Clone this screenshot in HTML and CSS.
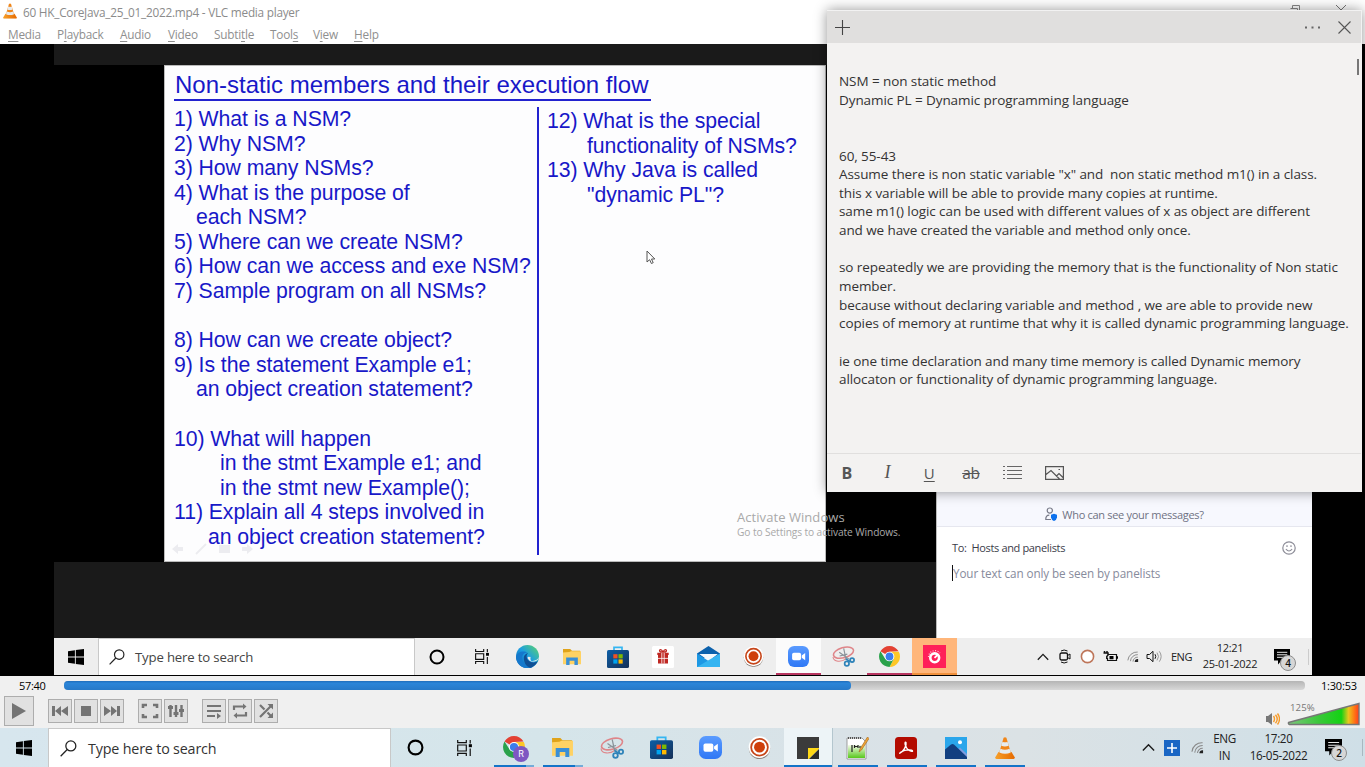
FILE: index.html
```html
<!DOCTYPE html>
<html lang="en">
<head>
<meta charset="utf-8">
<title>60 HK_CoreJava_25_01_2022.mp4 - VLC media player</title>
<link rel="stylesheet" href="styles.css">
</head>
<body>
<svg class="defs" width="0" height="0">
  <defs>
    <linearGradient id="gEdge" x1="0" y1="1" x2="1" y2="0"><stop offset="0" stop-color="#0c59a4"/><stop offset=".5" stop-color="#1b9de2"/><stop offset="1" stop-color="#5fd668"/></linearGradient>
    <linearGradient id="gStore" x1="0" y1="0" x2="1" y2="1"><stop offset="0" stop-color="#0d5ea6"/><stop offset="1" stop-color="#153057"/></linearGradient>
    <linearGradient id="gZoom" x1="0" y1="0" x2="0" y2="1"><stop offset="0" stop-color="#5a9bff"/><stop offset="1" stop-color="#2f78f5"/></linearGradient>
    <linearGradient id="gCone" x1="0" y1="0" x2="1" y2="0"><stop offset="0" stop-color="#f7a02a"/><stop offset="1" stop-color="#e56a00"/></linearGradient>
    <linearGradient id="gVol" x1="0" y1="0" x2="1" y2="0"><stop offset="0" stop-color="#7cc67c"/><stop offset=".45" stop-color="#38c838"/><stop offset=".75" stop-color="#14d214"/><stop offset=".85" stop-color="#e8c81e"/><stop offset=".93" stop-color="#ff7a14"/><stop offset="1" stop-color="#ff3c1e"/></linearGradient>
    <linearGradient id="gNpp" x1="0" y1="0" x2="0" y2="1"><stop offset="0" stop-color="#f4fbe8"/><stop offset="1" stop-color="#58c81c"/></linearGradient>
  </defs>
  <symbol id="win" viewBox="0 0 16 16"><path d="M0 2.2 6.9 1.2V7.6H0zM7.8 1.1 16 0V7.6H7.8zM0 8.4H6.9V14.8L0 13.8zM7.8 8.4H16V16L7.8 14.9z"/></symbol>
  <symbol id="lens" viewBox="0 0 16 16"><g fill="none" stroke="#222" stroke-width="1.2"><circle cx="10.2" cy="5.6" r="4.7"/><path d="M6.8 9 .6 15.3"/></g></symbol>
  <symbol id="ring" viewBox="0 0 16 16"><circle cx="8" cy="8" r="6.5" fill="none" stroke="#000" stroke-width="2"/></symbol>
  <symbol id="tview" viewBox="0 0 16 16"><g fill="none" stroke="#111" stroke-width="1.2"><path d="M1.2 0V2.7H9.8V0M1.2 16V13.3H9.8V16M1.2 5H9.8V11H1.2zM13.7 0V3.500M13.7 8.500V16"/></g><path d="M12.3 4.2H15.4V7.2H12.3z"/></symbol>
  <symbol id="chrome" viewBox="0 0 22 22"><path d="M11 11 1.500 5.500A11 11 0 0 1 20.500 5.500L11 6z" fill="#e34133"/><path d="M11 6H20.800A11 11 0 0 1 11 22L15.500 13.600z" fill="#fdc727"/><path d="M11 22A11 11 0 0 1 1.500 5.500L6.600 13.500 15.400 13.600z" fill="#2aa24b"/><circle cx="11" cy="11" r="5.1" fill="#fff"/><circle cx="11" cy="11" r="4.1" fill="#3b7ded"/></symbol>
  <symbol id="folder" viewBox="0 0 22 20"><path d="M1 1H9L11 3H20V7H1z" fill="#e0a31a"/><path d="M1 5 8 4.500 10 3.600H21V18H1z" fill="#ffd263"/><path d="M4.500 19V10.500H17.500V19H13.700V14.200H8.300V19z" fill="#3a8fd6"/></symbol>
  <symbol id="store" viewBox="0 0 22 22"><path d="M7 5V1.300H15V5" fill="none" stroke="#35b6f2" stroke-width="1.7"/><rect y="4" width="22" height="18" rx="1.6" fill="url(#gStore)"/><path d="M6.300 8.200H10.500V12.400H6.300z" fill="#f25022"/><path d="M11.500 8.200H15.700V12.400H11.500z" fill="#7fba00"/><path d="M6.300 13.400H10.500V17.600H6.300z" fill="#00a4ef"/><path d="M11.500 13.400H15.700V17.600H11.500z" fill="#ffb900"/></symbol>
  <symbol id="zoom" viewBox="0 0 22 22"><rect width="22" height="22" rx="6.5" fill="url(#gZoom)"/><rect x="4.3" y="7.2" width="9.4" height="7.8" rx="1.8" fill="#fff"/><path d="M14.4 10 18 7.400V14.800L14.400 12.300z" fill="#fff"/></symbol>
  <symbol id="target" viewBox="0 0 22 22"><circle cx="11" cy="11.8" r="10.2" fill="#8c817b"/><circle cx="11" cy="10.700" r="10.4" fill="#fff"/><circle cx="11" cy="10.700" r="8" fill="none" stroke="#c6461a" stroke-width="1.7"/><circle cx="11" cy="10.700" r="5.2" fill="#cf3f0b"/></symbol>
  <symbol id="snip" viewBox="0 0 24 22"><g fill="none" stroke="#df8589" stroke-width="1.6"><ellipse cx="12" cy="7" rx="10.8" ry="5.3" transform="rotate(-16 12 7)"/><path d="M1 11.500C1.500 17 10 17 14.500 13.500" stroke-width="1.1"/></g><path d="M7.500 6.500 17.500 13.600M12.200 2.500 14.700 14.200M8 10.500 16 8.500" stroke="#8a9299" stroke-width="1.2" fill="none"/><g fill="none" stroke="#2f83b9" stroke-width="1.8"><circle cx="15.5" cy="18.5" r="2.3"/><circle cx="21" cy="14.7" r="2.1"/><path d="M14.500 13.500 19 16.500"/></g></symbol>
  <symbol id="cone" viewBox="0 0 20 22"><path d="M3.500 15H16.500L19.700 20.300Q20 22 18.500 22H1.500Q0 22 .3 20.300z" fill="url(#gCone)"/><path d="M8.600.8Q10-.4 11.400.8L16 16.300Q10 20 4 16.300z" fill="#f0861a"/><path d="M7.500 4.700Q10 5.800 12.500 4.700L13.700 8.800Q10 10.400 6.200 8.800z" fill="#e6ebef"/><path d="M5.400 11.700Q10 14 14.600 11.700L15.700 15.500Q10 18.200 4.300 15.500z" fill="#e6ebef"/></symbol>
  <symbol id="wifi" viewBox="0 0 14 14"><g fill="none" stroke="#888" stroke-width="1.1"><path d="M1 11.500A10.800 10.800 0 0 1 12.500 1.800M4 12.500A8.300 8.300 0 0 1 12.600 4.800M7 13A5.300 5.300 0 0 1 12.700 7.800"/></g><path d="M9 13.300A3.600 3.600 0 0 1 13 10V13.300z" fill="#222"/></symbol>
  <symbol id="chev" viewBox="0 0 12 8"><path d="M.8 6.800 6 1.400 11.200 6.800" fill="none" stroke="#1c1c1c" stroke-width="1.3"/></symbol>
  <symbol id="note" viewBox="0 0 16 16"><path d="M0 0H16V11.500H7.500L4 15.500V11.500H0z"/><path d="M3 3.300H13.300M3 5.800H13.300M3 8.300H10" stroke="#e8e8e8" stroke-width="1"/></symbol>
</svg>

<div class="player">
  <header class="titlebar">
    <svg class="app-icon" viewBox="0 0 20 22"><use href="#cone"/></svg>
    <span class="title">60 HK_CoreJava_25_01_2022.mp4 - VLC media player</span>
    <div class="winbtns">
      <svg width="12" height="12"><path d="M1 5.500H11" stroke="#777"/></svg>
      <svg width="12" height="12"><path d="M1.500 3.500H8.500V11M3.500 3.500V.5H10.500V8" fill="none" stroke="#888"/></svg>
      <svg width="12" height="12"><path d="M1 0 11 10M11 0 1 10" stroke="#777"/></svg>
    </div>
  </header>
  <nav class="menu">
    <span class="m1"><u>M</u>edia</span><span class="m2">P<u>l</u>ayback</span><span class="m3"><u>A</u>udio</span><span class="m4"><u>V</u>ideo</span><span class="m5">Subti<u>t</u>le</span><span class="m6">Tool<u>s</u></span><span class="m7">V<u>i</u>ew</span><span class="m8"><u>H</u>elp</span>
  </nav>

  <main class="video">
    <div class="shared">
      <div class="band-top"></div>
      <div class="stage">
        <section class="slide">
          <h1>Non-static members and their execution flow</h1>
          <div class="cols">
            <div class="col-a">1) What is a NSM?
2) Why NSM?
3) How many NSMs?
4) What is the purpose of
<span class="in1">each NSM?</span>
5) Where can we create NSM?
6) How can we access and exe NSM?
7) Sample program on all NSMs?

8) How can we create object?
9) Is the statement Example e1;
<span class="in1">an object creation statement?</span>

10) What will happen
<span class="in3">in the stmt Example e1; and</span>
<span class="in3">in the stmt new Example();</span>
11) Explain all 4 steps involved in
<span class="in2">an object creation statement?</span></div>
            <div class="col-b">12) What is the special
<span class="in4">functionality of NSMs?</span>
13) Why Java is called
<span class="in4">"dynamic PL"?</span></div>
          </div>
          <svg class="ghost" width="90" height="14" fill="#ececf0"><path d="M0 7 6 2V5H11V9H6V12z"/><path d="M24 12 34 2" stroke="#ececf0" stroke-width="2"/><path d="M47 3H58V11H47zM81 7 75 2V5H70V9H75V12z"/></svg>
          <svg class="cursor" width="10" height="15"><path d="M1 1V12L3.600 9.700 5.400 13.500 7.200 12.700 5.500 9H8.800z" fill="#fff" stroke="#555"/></svg>
        </section>
      </div>
      <div class="band-low"></div>
      <div class="taskbar inner">
        <div class="start"><svg width="16" height="16"><use href="#win"/></svg></div>
        <div class="search"><svg width="16" height="16"><use href="#lens"/></svg><span>Type here to search</span></div>
        <div class="apps">
          <i><svg width="16" height="16"><use href="#ring"/></svg></i>
          <i><svg width="16" height="15"><use href="#tview"/></svg></i>
          <i><svg width="23" height="23" viewBox="0 0 22 22"><circle cx="11" cy="11" r="11" fill="url(#gEdge)"/><path d="M0 12C1 6 8 5 11 7.500 5 7 3 16 12 20.500L16 21A11 11 0 0 1 0 12z" fill="#1578cc"/><path d="M7.500 12.500C7.500 9.500 10 8 11.500 8 9 10 10 15.500 15 16.500 17.500 17 20 16 21 15A11 11 0 0 1 13.500 21.700C9.500 20.500 7.500 16.500 7.500 12.500z" fill="#0f4f94"/><path d="M22 11.500C21 16.500 15.500 16.500 13.300 15 11.800 13.600 13.900 12.500 13.500 10.500L14 15C18 15.800 21 14 22 11.500z" fill="#eee"/><path d="M11.200 11.500A2.300 2.300 0 0 1 14 12C13 13.300 13 14.300 14.500 15 13 15.300 10.800 13.500 11.200 11.500z" fill="#eee"/></svg></i>
          <i><svg width="20" height="18"><use href="#folder"/></svg></i>
          <i><svg width="22" height="22"><use href="#store"/></svg></i>
          <i><svg width="22" height="22" viewBox="0 0 22 22"><rect width="22" height="22" rx="1.5" fill="#fff"/><path d="M6 9H16V17.500H6zM5.300 6.800H16.700V9H5.300z" fill="#bf2722"/><path d="M11 6C9 2 6 4 8.500 6H13.500C16 4 13 2 11 6" fill="none" stroke="#bf2722" stroke-width="1.3"/><path d="M9.800 6.800V17.500M12.200 6.800V17.500M6 12.400H16" stroke="#fff" stroke-width=".8"/></svg></i>
          <i><svg width="23" height="21" viewBox="0 0 23 21"><path d="M0 7.500 11.500 0 23 7.500V12H0z" fill="#0c61ac"/><path d="M2.200 8H20.800L12 15z" fill="#f3f8fc"/><path d="M0 7.500 13 16 23 21H0z" fill="#1d98e4"/><path d="M23 7.500V21H0z" fill="#35b4f1"/></svg></i>
          <i><svg width="21" height="21"><use href="#target"/></svg></i>
          <i class="open lit"><svg width="21" height="21"><use href="#zoom"/></svg></i>
          <i><svg width="23" height="21"><use href="#snip"/></svg></i>
          <i class="open"><svg width="21" height="21"><use href="#chrome"/></svg></i>
          <i class="warn"><svg width="23" height="23" viewBox="0 0 23 23"><rect width="23" height="23" fill="#ff2059"/><circle cx="11.7" cy="12.8" r="4.4" fill="none" stroke="#fff" stroke-width="2.6"/><path d="M11.500 12.800 15 9.500" stroke="#fff" stroke-width="1.8"/><path d="M5.500 12A6.500 6.500 0 0 1 17 8" fill="none" stroke="#ffd2de" stroke-dasharray="1 1.5" stroke-width="1.2"/></svg></i>
        </div>
        <div class="tray">
          <b class="w22"><svg width="12" height="8"><use href="#chev"/></svg></b>
          <b class="w22"><svg width="12" height="15" viewBox="0 0 12 15" fill="none" stroke="#111"><rect x="1" y="4" width="7.5" height="7" rx="1.5" stroke-width="1.3"/><path d="M8.500 6.500 11 5V10L8.500 8.500M2 2Q5 0 8.500 2M2 13Q5 15 8.500 13"/></svg></b>
          <b class="w22"><svg width="15" height="15"><circle cx="7.5" cy="7.5" r="6.1" fill="#fff" stroke="#be765a" stroke-width="1.6"/></svg></b>
          <b class="w23"><svg width="15" height="11" viewBox="0 0 15 11"><path d="M5 3.500H13.500V9.500H4.500V7" fill="none" stroke="#111" stroke-width="1.2"/><path d="M6.500 5H10.500V8.300H6.500zM13.500 5.300H15V7.700H13.500z"/><path d="M1.500 0V2M4 0V2M.5 2H5V4L3.800 5.500V8" fill="none" stroke="#111" stroke-width="1.5"/></svg></b>
          <b class="w22"><svg width="12" height="13"><use href="#wifi"/></svg></b>
          <b class="w21"><svg width="17" height="13" viewBox="0 0 17 13" fill="none" stroke="#111"><path d="M1 4.500H3.500L7 1.300V11.700L3.500 8.500H1z"/><path d="M9 4.200Q10.500 6.500 9 8.800"/><path d="M11 2.600Q14 6.500 11 10.400M13.300 1.300Q17 6.500 13.300 11.700" stroke="#999"/></svg></b>
          <span class="lang">ENG</span>
          <span class="clock">12:21<br>25-01-2022</span>
          <span class="msgs"><svg width="16" height="16"><use href="#note"/></svg><em>4</em></span>
        </div>
      </div>
    </div>
    <aside class="chat">
      <div class="chat-head"><svg width="13" height="14" viewBox="0 0 13 14"><circle cx="4.8" cy="3.6" r="2.6" fill="none" stroke="#777a88" stroke-width="1.2"/><path d="M6 12.500H.8Q.5 8.300 4.300 8.200" fill="none" stroke="#777a88" stroke-width="1.2"/><path d="M9 6.700 12 7.800V10.500Q11.700 12.800 9 14 6.300 12.800 6 10.500V7.800z" fill="#0e72ed"/></svg><span>Who can see your messages?</span></div>
      <div class="chat-to"><span class="to">To:&nbsp; Hosts and panelists</span><svg width="14" height="14" fill="none" stroke="#8d8d98" stroke-width="1.2"><circle cx="7" cy="7" r="6.2"/><path d="M3.900 8Q7 12 10.100 8"/><path d="M5 4.300V6M9 4.300V6"/></svg></div>
      <div class="chat-input"><span>Your text can only be seen by panelists</span></div>
    </aside>
    <div class="activate"><p class="a1">Activate Windows</p><p class="a2">Go to Settings to activate Windows.</p></div>
  </main>

  <div class="controls">
    <div class="seek"><span class="now">57:40</span><div class="track"><div class="fill"></div></div><span class="total">1:30:53</span></div>
    <div class="buttons">
      <button class="play"><svg width="16" height="18"><path d="M1 1 15 9 1 17z"/></svg></button>
      <div class="grp"><button><svg width="16" height="12"><path d="M0 1H3V11H0zM9 1V11L3 6zM16 1V11L9 6z"/></svg></button><button><svg width="10" height="10"><path d="M0 0H10V10H0z"/></svg></button><button><svg width="16" height="12"><path d="M0 1 7 6 0 11zM7 1 13 6 7 11zM13 1H16V11H13z"/></svg></button></div>
      <div class="grp"><button><svg width="18" height="16"><path d="M2 5V2H6M12 2H16V5M16 11V14H12M6 14H2V11" fill="none" stroke="#747474" stroke-width="2.6"/></svg></button><button><svg width="18" height="16"><path d="M3.500 2V14M9 2V14M14.500 2V14" stroke="#747474" stroke-width="2.4"/><path d="M1 3H6V6H1zM6.500 9H11.500V12H6.500zM12 6H17V9H12z"/></svg></button></div>
      <div class="grp"><button><svg width="16" height="16"><path d="M1 2H15V4H1zM1 7H15V9H1zM1 12H9V14H1zM11 10 15 13 11 16z"/></svg></button><button><svg width="16" height="16"><path d="M2 7V3.500H12M14 9V12.500H4" fill="none" stroke="#747474" stroke-width="2.2"/><path d="M11 .5 14.500 3.500 11 6.500zM5 9.500 1.500 12.500 5 15.500z"/></svg></button><button><svg width="16" height="16"><path d="M2 2 6.500 6.500M9.500 9.500 13 13M2 14 13 3" stroke="#747474" stroke-width="2.2"/><path d="M9.500 1H15V6.500zM9.500 15H15V9.500z"/></svg></button></div>
      <div class="volume">
        <svg class="spk" width="14" height="14"><path d="M0 4H2L6 1V13L2 10H0z" fill="#777"/><path d="M7.500 4Q9.500 7 7.500 10M9.500 2.700Q13 7 9.500 11.300M11.500 1.500Q15.500 7 11.500 12.500" fill="none" stroke="#f79b28" stroke-width="1.4"/></svg>
        <svg class="wedge" width="74" height="24"><path d="M1.500 20.500 72 1.500V22.500H2.500Q1 22 1.500 20.500z" fill="url(#gVol)" stroke="#777" stroke-width="1.4"/></svg>
        <span class="pct">125%</span>
      </div>
    </div>
  </div>

  <footer class="taskbar outer">
    <div class="start"><svg width="16" height="16"><use href="#win"/></svg></div>
    <div class="search"><svg width="17" height="17"><use href="#lens"/></svg><span>Type here to search</span></div>
    <div class="apps">
      <i><svg width="17" height="17"><use href="#ring"/></svg></i>
      <i><svg width="17" height="16"><use href="#tview"/></svg></i>
      <i class="run stack profile"><svg width="26" height="26" viewBox="0 0 26 26"><use href="#chrome" width="22" height="22" x="0" y="0"/><circle cx="18" cy="18" r="8" fill="#7e57c2"/><text x="18" y="21.2" text-anchor="middle" class="av">R</text></svg></i>
      <i class="run stack"><svg width="23" height="21"><use href="#folder"/></svg></i>
      <i><svg width="24" height="22"><use href="#snip"/></svg></i>
      <i><svg width="23" height="23"><use href="#store"/></svg></i>
      <i><svg width="23" height="23"><use href="#zoom"/></svg></i>
      <i><svg width="23" height="23"><use href="#target"/></svg></i>
      <i class="run lit"><svg width="22" height="22"><path d="M0 0H22V11L11 22H0z" fill="#3b3b3b"/><path d="M22 11V12L12 22H11V11z" fill="#ffd916"/><path d="M22 12V22H12z" fill="#2c2c2c"/></svg></i>
      <i class="run"><svg width="23" height="24" viewBox="0 0 23 24"><path d="M1 2H16L20 6V23H1z" fill="#fff" stroke="#888" stroke-width=".8"/><path d="M2 9H19V22H2z" fill="url(#gNpp)"/><path d="M2 2H16" stroke="#555" stroke-dasharray="1 1" stroke-width="2"/><path d="M6 9V16M8.500 9V12M9 10.500H12M12 9V12M14 10V12" stroke="#222" stroke-width="1.2"/><path d="M21.500 1 14 13 13 16 15.500 14 23 2.500z" fill="#f3a634" stroke="#a56b25" stroke-width=".7"/></svg></i>
      <i class="run"><svg width="22" height="22"><rect width="22" height="22" rx="3.5" fill="#b30b00"/><path d="M5 16C8 15 12 9 11 5.500 10.300 4.300 9.500 6 10.500 8.500 12 12.500 15 14.800 17.500 14.200 18 12.500 11 12 6 15 4.500 16.300 4.500 16.600 5 16z" fill="none" stroke="#fff" stroke-width="1.4"/></svg></i>
      <i class="run"><svg width="22" height="22"><path d="M0 0H22V22H0z" fill="#2aa6eb"/><path d="M11 14 15 10.500 22 17V22H11z" fill="#7e9cdf"/><path d="M0 12.500 6 7.500Q7.500 6.500 9 7.500L22 20V22H0z" fill="#123f80"/><circle cx="15" cy="5.3" r="2" fill="#fff"/></svg></i>
      <i class="run"><svg width="20" height="22"><use href="#cone"/></svg></i>
    </div>
    <div class="tray">
      <b class="w24"><svg width="13" height="9"><use href="#chev"/></svg></b>
      <b class="w24"><svg width="16" height="16"><path d="M0 0H16V16H0z" fill="#1a66c4"/><path d="M8 3V13M3 8H13" stroke="#fff" stroke-width="1.6"/></svg></b>
      <b class="w26"><svg width="13" height="13"><use href="#wifi"/></svg></b>
      <span class="lang">ENG<br>IN</span>
      <span class="clock">17:20<br>16-05-2022</span>
      <span class="msgs"><svg width="17" height="17"><use href="#note"/></svg><em>2</em></span>
    </div>
  </footer>
</div>

<section class="sticky">
  <div class="sticky-bar">
    <svg width="15" height="15"><path d="M7.500 0V15M0 7.500H15" stroke="#444" stroke-width="1.1"/></svg>
    <svg class="dots" width="15" height="3" fill="#666"><path d="M0 .5H2V2.500H0zM6.500 .5H8.500V2.500H6.500zM13 .5H15V2.500H13z"/></svg>
    <svg width="13" height="13"><path d="M.5 .5 12.500 12.500M12.500 .5 .5 12.500" stroke="#555" stroke-width="1.1"/></svg>
  </div>
  <div class="sticky-text">NSM = non static method
Dynamic PL = Dynamic programming language


60, 55-43
Assume there is non static variable "x" and  non static method m1() in a class.
this x variable will be able to provide many copies at runtime.
same m1() logic can be used with different values of x as object are different
and we have created the variable and method only once.

so repeatedly we are providing the memory that is the functionality of Non static
member.
because without declaring variable and method , we are able to provide new
copies of memory at runtime that why it is called dynamic programming language.

ie one time declaration and many time memory is called Dynamic memory
allocaton or functionality of dynamic programming language.<span class="thumb"></span></div>
  <div class="sticky-tools">
    <span class="tb">B</span><span class="ti">I</span><span class="tu">U</span><span class="ts">ab</span>
    <span><svg width="19" height="13" fill="none" stroke="#666"><path d="M4 .5H19M4 4.500H19M4 8.500H19M4 12.500H19"/><path d="M0 .5H2M0 4.500H2M0 8.500H2M0 12.500H2"/></svg></span>
    <span><svg width="19" height="14" fill="none" stroke="#555" stroke-width="1.2"><path d="M.6 .6H18.400V13.400H.6zM1 8.500 6 4.500 14.500 13M11.500 10 14 7.500 18 11.500"/><path d="M13.500 3.500H15"/></svg></span>
  </div>
</section>
</body>
</html>
```
FILE: styles.css
```css
* { box-sizing: border-box; }
body { margin: 0; width: 1365px; height: 767px; overflow: hidden; position: relative; font-family: "Open Sans", "Noto Sans", sans-serif; color: #222; }
p, h1 { margin: 0; font-weight: 400; }
i, em { font-style: normal; }
svg { display: block; flex: none; }
.defs { position: absolute; }
.player { display: flex; flex-direction: column; height: 767px; }

/* title bar and menu */
.titlebar { height: 24px; display: flex; align-items: center; background: #fff; padding-left: 3px; }
.app-icon { width: 14px; height: 16px; margin-top: -2px; }
.title { font-size: 11.8px; color: #8b8b8b; margin-left: 6px; margin-top: -1px; white-space: nowrap; letter-spacing: -.25px; }
.winbtns { display: flex; gap: 34px; margin-left: auto; margin-right: 18px; align-self: flex-start; padding-top: 5px; }
.menu { height: 20px; background: #fff; display: flex; color: #8f8f8f; font-size: 11.8px; line-height: 20px; padding-left: 8px; }
.menu span { letter-spacing: -.22px; white-space: nowrap; }
.menu u { text-underline-offset: 2px; }
.m1 { width: 49px; } .m2 { width: 63px; } .m3 { width: 48px; } .m4 { width: 46px; } .m5 { width: 56px; } .m6 { width: 43px; } .m7 { width: 41px; }

/* video picture */
.video { position: relative; height: 632px; background: #000; padding-left: 54px; }
.shared { width: 1258px; display: flex; flex-direction: column; }
.band-top { height: 21px; background: #1a1a1a; }
.stage { height: 497px; background: #000; padding-left: 110px; }
.band-low { height: 76px; background: #1a1a1a; }
.slide { position: relative; width: 662px; height: 497px; background: #fdfdfe; border: 1px solid #bbb; color: #1818c8; font-family: "Liberation Sans", Arial, sans-serif; padding: 4px 0 0 9px; }
.slide h1 { display: inline-block; font-size: 24px; line-height: 29px; height: 31px; padding: 0 2px 0 1px; border-bottom: 2px solid #2222cf; white-space: nowrap; vertical-align: top; }
.cols { display: flex; font-size: 21.25px; line-height: 24.58px; letter-spacing: -.07px; white-space: pre; margin-top: 6px; }
.col-a { width: 365px; height: 448px; border-right: 2px solid #2222cf; }
.col-b { padding: 2px 0 0 8px; }
.in1 { margin-left: 22px; } .in2 { margin-left: 34px; } .in3 { margin-left: 46px; } .in4 { margin-left: 40px; }
.ghost { position: absolute; left: 7px; top: 476px; }
.cursor { position: absolute; left: 481px; top: 184px; }
.activate { position: absolute; left: 737px; top: 464px; color: #a9a9a9; white-space: nowrap; }
.a1 { font-size: 13px; line-height: 18px; letter-spacing: .06px; }
.a2 { font-size: 10.2px; line-height: 13px; letter-spacing: -.1px; }

/* chat panel */
.chat { position: absolute; left: 936px; top: 448px; width: 376px; height: 146px; background: #fff; border-left: 1px solid #bbb; font-size: 11px; }
.chat-head { height: 35px; background: #f7f8fe; border-bottom: 1px solid #e6e7ef; display: flex; justify-content: center; align-items: center; gap: 4px; color: #6f7283; padding-top: 10px; letter-spacing: -.3px; }
.chat-to { display: flex; align-items: center; justify-content: space-between; padding: 0 16px 0 15px; height: 42px; color: #3b3d4a; }
.to { letter-spacing: -.35px; margin-top: -2px; }
.chat-input { padding-left: 15px; height: 16px; display: flex; color: #878b9c; margin-top: -4px; line-height: 16px; font-size: 11.7px; }
.chat-input span { border-left: 1px solid #111; letter-spacing: -.1px; white-space: nowrap; }

/* taskbars */
.taskbar { display: flex; }
.taskbar i { position: relative; display: flex; align-items: center; justify-content: center; }
.apps, .tray { display: flex; }
.tray { margin-left: auto; align-items: center; }
.tray b { display: flex; justify-content: center; }
.start { display: flex; align-items: center; justify-content: center; }
.search { display: flex; align-items: center; background: #fff; border: 1px solid #c8c8c8; border-bottom: 0; white-space: nowrap; }
.w21 { width: 21px; } .w22 { width: 22.3px; } .w23 { width: 23px; } .w24 { width: 24px; } .w26 { width: 26px; }
.lang, .clock { text-align: center; white-space: nowrap; }
.msgs { position: relative; }
.msgs em { position: absolute; left: 6px; top: 6px; width: 16px; height: 16px; border: 1px solid #8c8c8c; border-radius: 50%; background: #d6d6d6; font-size: 10px; line-height: 14px; text-align: center; font-weight: 600; color: #111; }

.inner { height: 37px; background: #eee; }
.inner .start { width: 44px; }
.inner .search { width: 317px; padding-left: 10px; font-size: 13.2px; letter-spacing: -.17px; color: #444; }
.inner .search span { margin-left: 10px; }
.inner .apps { margin-left: -1px; }
.inner i { width: 45.25px; }
.inner .open { border-bottom: 2px solid #b83560; padding-top: 2px; }
.inner .lit { background: #fbfbfb; }
.inner .warn { background: #ffb67a; border-bottom: 2px solid #f0913d; padding-top: 2px; }
.inner .tray { font-size: 11px; margin-right: 3px; }
.inner .lang { width: 33px; letter-spacing: -.4px; }
.inner .clock { width: 64px; line-height: 16px; letter-spacing: -.3px; margin-top: -2px; }
.inner .msgs { width: 35px; margin-left: 12px; border-right: 1px solid #ccc; }

.outer { height: 39px; background: linear-gradient(90deg, #d7e6ee, #d5e5ea 40%, #d9e2e7 62%, #dbe2e5 75%, #cfdfe7); }
.outer .start { width: 48px; }
.outer .search { width: 343px; padding-left: 11px; font-size: 14.3px; letter-spacing: -.17px; color: #333; }
.outer .search span { margin-left: 11px; }
.outer i { width: 49.1px; }
.outer .run::after { content: ""; position: absolute; left: 5px; right: 4px; bottom: 0; height: 2px; background: #1474c8; }
.outer .stack::after { background: linear-gradient(90deg, #1474c8 80%, #75acd8 80%); }
.outer .lit { background: #edf4f7; border-right: 1px solid #b4c6ce; }
.outer .lit::after { left: 0; right: 0; }
.outer .profile { padding-left: 5px; padding-top: 3px; }
.av { font: 9px Roboto, sans-serif; fill: #fff; }
.outer .tray { font-size: 11.7px; line-height: 17px; }
.outer .lang { width: 29px; letter-spacing: -.4px; }
.outer .clock { width: 79px; letter-spacing: -.33px; margin-top: -2px; }
.outer .lang { margin-top: -2px; }
.outer .msgs { width: 38px; margin-left: 7px; margin-right: 2px; border-right: 1px solid #a9b8c0; }

/* playback controls */
.controls { height: 52px; background: #f0f0f0; }
.seek { display: flex; align-items: center; height: 19px; font-size: 11px; color: #000; }
.now { width: 64px; padding-left: 19px; letter-spacing: -.3px; }
.track { width: 1241px; height: 9px; border-radius: 4px; background: linear-gradient(#b5b5b5, #d8d8d8); }
.fill { width: 787px; height: 9px; border-radius: 4px; background: linear-gradient(#1f6dbb, #2b85d8 25%, #2779c8); }
.total { margin-left: 16px; letter-spacing: -.2px; }
.buttons { display: flex; align-items: center; height: 32px; padding-left: 4px; }
.buttons button { width: 24px; height: 24px; border: 1px solid #adadad; background: #e1e1e1; padding: 0; display: flex; align-items: center; justify-content: center; fill: #747474; }
.buttons .play { width: 30px; height: 30px; }
.grp { display: flex; gap: 2px; margin-left: 14px; }
.volume { position: relative; display: flex; margin-left: auto; align-items: flex-end; margin-right: 4px; gap: 7px; padding-top: 6px; }
.pct { position: absolute; left: 24px; top: 6px; font-size: 9.6px; color: #777; line-height: 12px; letter-spacing: .1px; }

/* sticky note */
.sticky { position: absolute; left: 827px; top: 10px; width: 535px; height: 482px; background: #f3f2f1; border: 1px solid #f2f2f2; border-left: 0; display: flex; flex-direction: column; box-shadow: 0 0 12px rgba(0,0,0,.42); }
.sticky-bar { height: 32px; background: #e0dfde; display: flex; align-items: center; padding: 0 10px 0 8px; }
.dots { margin-left: auto; margin-right: 18px; }
.sticky-text { position: relative; height: 410px; padding: 29px 0 0 12px; font-size: 13.5px; line-height: 18.64px; letter-spacing: -.085px; white-space: pre; color: #333; }
.thumb { position: absolute; right: 2px; top: 16px; width: 2px; height: 16px; background: #777; }
.sticky-tools { flex: 1; border-top: 1px solid #e0dfde; display: flex; align-items: center; color: #555; font-size: 16px; padding-right: 1px; }
.sticky-tools span { width: 41.8px; display: flex; justify-content: center; margin-left: -.15px; }
.sticky-tools .tb { font-weight: 700; font-size: 16px; width: 40px; }
.sticky-tools .ti { font-family: "Liberation Serif", serif; font-style: italic; font-size: 18px; }
.sticky-tools .tu { text-decoration: underline; font-size: 15px; text-underline-offset: 2px; }
.sticky-tools .ts { text-decoration: line-through; font-size: 15.5px; letter-spacing: -.3px; }
```
